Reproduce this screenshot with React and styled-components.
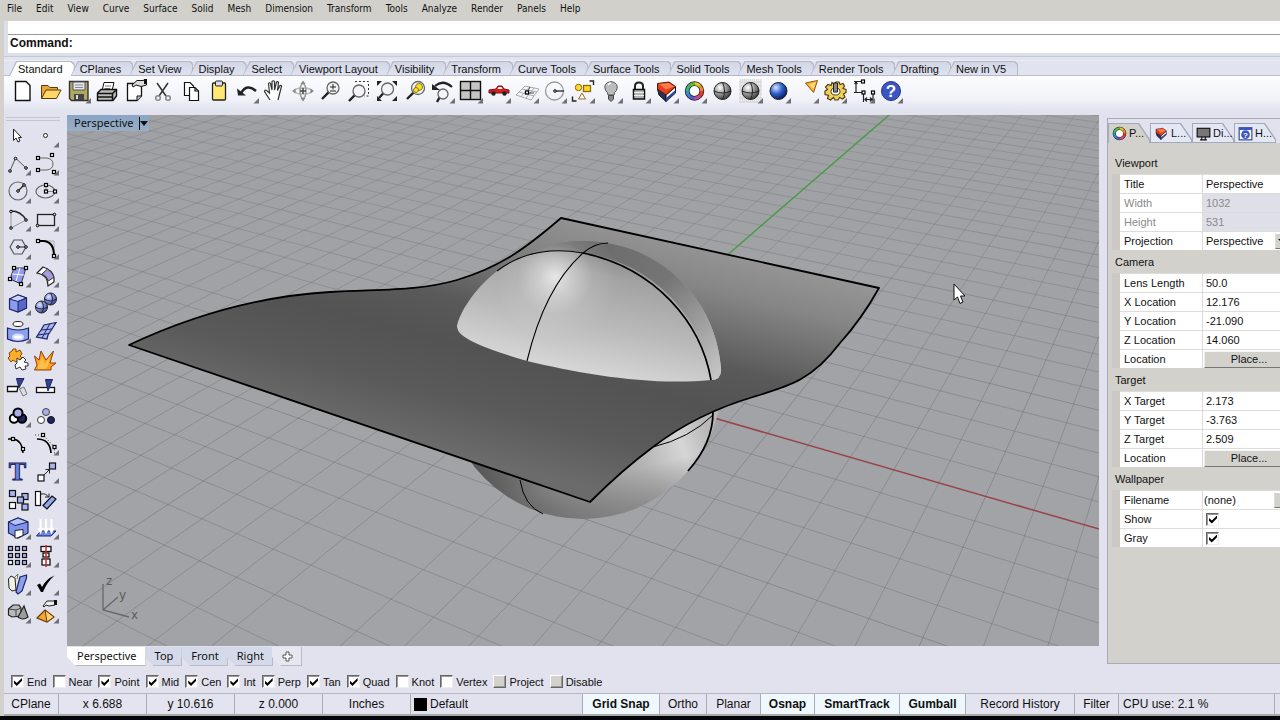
import React from "react";
import styled, { createGlobalStyle, css } from "styled-components";

const sans = `"Liberation Sans", Arial, sans-serif`;
const ui = `"Noto Sans", "Open Sans", sans-serif`;
const menuFont = `"DejaVu Sans Condensed", "DejaVu Sans", sans-serif`;

const GlobalStyle = createGlobalStyle`
  * { box-sizing: border-box; }
  body { margin: 0; background: #05060c; color: #111; font: 11px/16px ${sans}; }
  button, input, select { font: inherit; color: inherit; margin: 0; }
`;

/* ---------- page frame ---------- */

const Page = styled.div`
  min-height: 100vh;
  display: flex;
  flex-direction: column;
  overflow: hidden;
  background: #e1e2ee;
  border-bottom: 4px solid #05060c;
`;

const Body = styled.div`
  flex: 1;
  display: flex;
  flex-direction: column;
  border-left: 4px solid #d3d1cc;
`;

const MenuBar = styled.nav`
  display: flex;
  height: 21px;
  background: #d2d0cb;
`;

const MenuItem = styled.button`
  padding: 0 7px 4px;
  border: 0;
  background: none;
  font: 10px/16px ${menuFont};
  white-space: nowrap;
`;

const CommandArea = styled.section`
  height: 40px;
  padding: 0 0 8px 3px;
  border-bottom: 1px solid #eceef4;
  background: linear-gradient(#dcdee8 35px, #c6cad6 35px, #c6cad6 36px, #e1e3ee 36px);
`;

const CommandHistory = styled.div`
  height: 14px;
  margin-left: 1px;
  background: #fff;
  border-bottom: 1px solid #9b9b9b;
`;

const CommandLine = styled.label`
  display: flex;
  height: 18px;
  margin-left: 1px;
  padding-left: 2px;
  background: #fff;
  font-size: 12px;
  font-weight: 700;
  line-height: 16px;
`;

const CommandInput = styled.input`
  flex: 1;
  border: 0;
  padding: 0 4px;
  background: none;
  outline: 0;
`;

/* ---------- toolbar tabs and buttons ---------- */

const ToolTabs = styled.div`
  display: flex;
  height: 15px;
  padding-left: 5px;
  background: #e1e3ee;
  box-shadow: inset 0 -1px #b9bdcd;
`;

const ToolTab = styled.button`
  position: relative;
  z-index: 0;
  height: 15px;
  padding: 0 8px 0 9px;
  border: 0;
  background: none;
  line-height: 16px;
  white-space: nowrap;
  &::before, &::after {
    content: "";
    position: absolute;
    z-index: -1;
    inset: 0 -4px 0 0;
    clip-path: polygon(0 100%, 7px 0, calc(100% - 3px) 0, 100% 3px, 100% 100%);
    background: #b4b8c8;
  }
  &::after {
    inset: 1px -3px ${(p) => (p.$active ? 0 : 1)}px 1px;
    background: ${(p) => (p.$active ? "#ffffff" : "linear-gradient(#d3d6e6, #dfe2ee)")};
  }
`;

const Toolbar = styled.div`
  display: flex;
  height: 36px;
  padding: 1px 0 0 4px;
  background: linear-gradient(#fdfdff, #f2f3fa 60%, #dfe1ec);
`;

const IconButton = styled.button`
  display: block;
  width: 28px;
  height: 28px;
  padding: 0;
  border: 0;
  background: none;
  svg { display: block; }
`;

/* ---------- work area ---------- */

const Work = styled.main`
  flex: 1;
  display: flex;
  min-height: 556px;
`;

const ToolColumn = styled.aside`
  flex: none;
  width: 63px;
  padding-top: 5px;
`;

const Grip = styled.div`
  width: 54px;
  height: 4px;
  margin-left: 2px;
  border: solid #c3c6d2;
  border-width: 1px 0;
`;

const ToolGrid = styled.div`
  display: grid;
  grid-template-columns: 28px 28px;
`;

const ViewColumn = styled.section`
  flex: 1;
  min-width: 0;
  display: flex;
  flex-direction: column;
  padding-top: 3px;
`;

const Viewport = styled.div`
  flex: 1;
  position: relative;
  min-height: 0;
  overflow: hidden;
  background: #a0a1a5;
`;

const Scene = styled.svg`
  position: absolute;
  inset: 0;
  width: 100%;
  height: 100%;
`;

const ViewTitle = styled.button`
  position: absolute;
  top: 0;
  left: 0;
  display: flex;
  align-items: center;
  height: 16px;
  padding: 0 1px 0 7px;
  border: 0;
  background: linear-gradient(#88a6c6, #9aaec4);
  font: 11px/14px ${ui};
  gap: 5px;
`;

const ViewArrow = styled.span`
  display: flex;
  align-items: center;
  height: 13px;
  border-left: 1px solid #111;
  &::after {
    content: "";
    border: 4px solid transparent;
    border-width: 5px 4px 0;
    border-top-color: #111;
  }
`;

const ViewTabs = styled.div`
  display: flex;
  height: 22px;
  padding-top: 1px;
`;

const ViewTab = styled.button`
  height: 19px;
  padding: 0 8px 0 10px;
  margin-right: -1px;
  border: solid #b7bac6;
  border-width: 0 1px 1px 0;
  background: ${(p) => (p.$active ? "#fff" : p.$plain ? "#e6e7f1" : "#d5daea")};
  clip-path: polygon(0 0, 100% 0, 100% 100%, 9px 100%, 0 10px);
  font: 11px/18px ${ui};
  white-space: nowrap;
  svg { display: block; }
`;

/* ---------- properties panel ---------- */

const Panel = styled.aside`
  flex: none;
  width: 173px;
  margin: 6px 0 4px 8px;
  border: solid #a9abb3;
  border-width: 1px 0 1px 1px;
  background: #d2d1cb;
  overflow: hidden;
`;

const PanelTabs = styled.div`
  display: flex;
  height: 24px;
  padding-top: 4px;
  background: #e1e2ee;
`;

const PanelTab = styled.button`
  position: relative;
  z-index: 0;
  flex: none;
  display: flex;
  align-items: center;
  gap: 2px;
  width: 42px;
  padding: 0 0 0 4px;
  border: 0;
  background: none;
  font: 11px/16px ${sans};
  white-space: nowrap;
  svg { flex: none; }
  &::before, &::after {
    content: "";
    position: absolute;
    z-index: -1;
    inset: 0;
    clip-path: polygon(0 0, calc(100% - 11px) 0, 100% 16px, 100% 100%, 0 100%);
    background: #a4a9bb;
  }
  &::after {
    inset: 1px 1px ${(p) => (p.$active ? 0 : 1)}px 1px;
    background: ${(p) => (p.$active ? "#d2d1cb" : "#e4e8f5")};
  }
`;

const PropTable = styled.table`
  width: 100%;
  margin-top: 8px;
  border-collapse: separate;
  border-spacing: 0;
  table-layout: fixed;
`;

const GutterCol = styled.col`width: 12px;`;
const NameCol = styled.col`width: 83px;`;

const GroupHead = styled.th`
  height: 23px;
  padding: 0 7px;
  text-align: left;
  font-weight: 400;
`;

const Gutter = styled.td`
  padding: 0;
  border-left: 4px solid #d2d1cb;
  background: #cdc8c4;
`;

const NameCell = styled.th`
  height: 19px;
  padding: 0 4px;
  border: solid #dcdcdc;
  border-width: 1px 1px 0 0;
  background: #fff;
  color: ${(p) => (p.$off ? "#8a8a8a" : "#111")};
  text-align: left;
  font-weight: 400;
  line-height: 18px;
`;

const ValueCell = styled.td`
  height: 19px;
  padding: 0;
  border-top: 1px solid #dcdcdc;
  background: ${(p) => (p.$off ? "#dfdfe8" : "#fff")};
  color: ${(p) => (p.$off ? "#8a8a8a" : "#111")};
`;

const ValueRow = styled.div`
  display: flex;
  align-items: center;
  height: 18px;
  padding-left: ${(p) => (p.$flush ? 1 : 3)}px;
`;

const ValueInput = styled.input`
  flex: none;
  width: 70px;
  height: 18px;
  padding: 0;
  border: 0;
  background: none;
  outline: 0;
  &:disabled { color: #8a8a8a; }
`;

const ValueSelect = styled.select`
  flex: none;
  width: 69px;
  height: 18px;
  padding: 0;
  border: 0;
  appearance: none;
  background: none;
`;

const StubButton = styled.button`
  flex: none;
  width: 16px;
  height: 16px;
  padding: 0 2px;
  border: 1px solid;
  border-color: #fff #777 #777 #ddd;
  background: #d2d1cb;
`;

const DropMark = styled.span`
  display: block;
  border: solid transparent;
  border-width: 4px 4px 0;
  border-top-color: #111;
`;

const PlaceButton = styled.button`
  flex: none;
  width: 90px;
  height: 17px;
  padding: 0;
  border: 1px solid;
  border-color: #f4f4f4 #777 #777 #eee;
  background: #d2d1cb;
  line-height: 14px;
`;

const Tick = styled.input`
  appearance: none;
  position: relative;
  flex: none;
  width: 13px;
  height: 13px;
  border: 1px solid;
  border-color: #666 #eee #eee #666;
  background: #fff;
  box-shadow: inset 1px 1px #999;
  &:checked::after {
    content: "";
    position: absolute;
    inset: 2px 1px 1px 2px;
    background: #000;
    clip-path: polygon(0 30%, 35% 62%, 100% 0, 100% 35%, 35% 100%, 0 65%);
  }
  ${(p) =>
    p.$raised &&
    css`
      border-color: #fff #666 #666 #fff;
      background: #d2d1cb;
      box-shadow: inset -1px -1px #999;
    `}
`;

/* ---------- bottom bars ---------- */

const SnapBar = styled.div`
  display: flex;
  align-items: center;
  gap: 6px;
  height: 25px;
  padding: 2px 0 0 7px;
`;

const SnapItem = styled.label`
  display: flex;
  align-items: center;
  gap: 3px;
  white-space: nowrap;
`;

const StatusBar = styled.footer`
  display: flex;
  height: 23px;
  border-top: 1px solid #b5b7c3;
  border-bottom: 2px solid #a9aaa6;
  font-size: 12px;
  line-height: 20px;
`;

const cell = css`
  flex: none;
  width: ${(p) => p.$w}px;
  padding: 0;
  border: solid #a9abb6;
  border-width: 0 1px 0 0;
  background: #e3e4ef;
  text-align: center;
  white-space: nowrap;
`;

const StatusCell = styled.div`
  ${cell}
`;

const StatusToggle = styled.button`
  ${cell}
  background: ${(p) => (p.$on ? "#eef8fd" : "#e3e4ef")};
  font-weight: ${(p) => (p.$on ? 700 : 400)};
`;

const LayerCell = styled.div`
  flex: 1;
  display: flex;
  align-items: center;
  gap: 3px;
  padding-left: 3px;
  border-right: 1px solid #a9abb6;
`;

const Swatch = styled.span`
  width: 13px;
  height: 13px;
  background: #000;
`;

const CpuCell = styled.div`
  flex: none;
  width: 156px;
  padding-left: 4px;
  border-right: 1px solid #a9abb6;
`;

const StatusEnd = styled.div`
  width: 5px;
`;

/* ---------- icons, all on a 28 px cell ---------- */

const K = "#111";
const Sq = ({ x, y, f = "#fff" }) => (
  <rect x={x - 1.5} y={y - 1.5} width="3" height="3" fill={f} stroke="#000" strokeWidth="1.2" />
);
const Dot = ({ x, y }) => <circle cx={x} cy={y} r="1.3" fill="#ddd" stroke="#000" />;
const Lens = ({ x, y, r, hx, hy, f = "#f4f4f8" }) => (
  <>
    <path d={`M${x - r * 0.7} ${y + r * 0.7}L${hx} ${hy}`} stroke="#222" strokeWidth="2.4" />
    <circle cx={x} cy={y} r={r} fill={f} stroke="#666" strokeWidth="1.3" />
  </>
);
const Ball = ({ x, y, r, id, cross }) => (
  <>
    <circle cx={x} cy={y} r={r} fill={`url(#${id})`} stroke="#222" />
    {cross && (
      <path d={`M${x - r} ${y}Q${x} ${y + 4} ${x + r} ${y}M${x} ${y - r}Q${x + 4} ${y} ${x} ${y + r}`} stroke="#222" fill="none" />
    )}
  </>
);
const Ring = ({ x, y, r, w }) => {
  const colors = ["#e0c62c", "#e8862a", "#e0392d", "#c04a9c", "#5659c8", "#2f8fd0", "#33b389", "#62b83a"];
  const at = (a) => `${(x + r * Math.cos(a)).toFixed(2)} ${(y + r * Math.sin(a)).toFixed(2)}`;
  return (
    <g fill="none">
      <circle cx={x} cy={y} r={r} fill="#fff" stroke="#222" strokeWidth={w + 1.6} />
      {colors.map((c, i) => {
        const a = -Math.PI / 2 + (i * Math.PI) / 4;
        return <path key={c} d={`M${at(a)}A${r} ${r} 0 0 1 ${at(a + Math.PI / 4 + 0.05)}`} stroke={c} strokeWidth={w} />;
      })}
    </g>
  );
};
const Wedge = () => (
  <>
    <path d="M5.5 12L14 18V24.500L7 18Z" fill="#26335f" stroke="#111" />
    <path d="M14 18L23.500 10V16L14 24.500Z" fill="#fff" stroke="#111" />
    <path d="M14 21L23.500 13V16L14 24.500Z" fill="#33488f" />
    <path d="M5.500 6.500L17 5L23.500 9.500L14 18L5.500 12Z" fill="#e2401f" stroke="#5d150b" />
    <path d="M7 7L16.500 6L22 9.500L14 12.500Z" fill="#ff7a4a" />
  </>
);

const icons = {
  fresh: <path d="M7.5 4.5H18L22 8.500V23.500H7.500Z" fill="#fff" stroke={K} strokeWidth="1.400" />,
  open: (
    <>
      <path d="M5.500 21.500V8.500H12L14 10.500H21.500V13" fill="#e9a63a" stroke="#5a3a08" />
      <path d="M5.500 21.500L10 13H25L20.500 21.500Z" fill="#ffd768" stroke="#5a3a08" />
    </>
  ),
  save: (
    <>
      <path d="M5.500 4.500H24V23.500H7.500L5.500 21.500Z" fill="#b0a860" stroke="#333" strokeWidth="1.400" />
      <path d="M9 5H21V13H9Z" fill="#e4e6ee" stroke="#555" />
      <path d="M11 8H19M11 10.500H19" stroke="#8a8a8a" />
      <path d="M10 17H20V23H10Z" fill="#444" />
      <path d="M12 18H14V22H12Z" fill="#ddd" />
    </>
  ),
  print: (
    <>
      <path d="M10 14L12 5.500H22L20 14" fill="#fff" stroke={K} />
      <path d="M13 9H19M12.500 11.500H18" stroke="#777" />
      <path d="M5.500 16L9 12.500H24.500V19L21 23.500H5.500Z" fill="#bbb" stroke={K} strokeWidth="1.400" />
      <path d="M5.500 16.500H20.500L24.500 12.500M20.500 16.500V23M6 20H20" fill="none" stroke={K} strokeWidth="1.500" />
    </>
  ),
  props: (
    <>
      <path d="M7.500 6.500H21.500V19L17 23.500H7.500Z" fill="#fff" stroke={K} strokeWidth="1.300" />
      <path d="M17 23.500V19H21.500" fill="#ccc" stroke={K} />
      <path d="M12 8L17 3.500H22L26.500 3V8L21 9.500L16 8L13 10Z" fill="#ddd" stroke={K} />
      <path d="M24 2H27V7H24Z" fill="#111" />
    </>
  ),
  cut: (
    <g fill="none" stroke="#333">
      <path d="M9 6L18 19M20 6L11 19" strokeWidth="1.500" />
      <circle cx="10" cy="21" r="2.300" stroke="#888" strokeWidth="1.500" />
      <circle cx="20" cy="21" r="2.300" stroke="#888" strokeWidth="1.500" />
    </g>
  ),
  copy: (
    <g fill="#fff" stroke={K} strokeWidth="1.200">
      <path d="M8.500 5.500H14L17.500 9V18.500H8.500Z" />
      <path d="M13.500 10.500H19L22.500 14V23.500H13.500Z" />
      <path d="M19 10.500V14H22.500" fill="none" />
    </g>
  ),
  paste: (
    <>
      <rect x="8.500" y="6" width="13" height="17" rx="1" fill="#ffe873" stroke="#222" strokeWidth="1.300" />
      <rect x="11.500" y="4" width="7" height="5" rx="1" fill="#d9dbe6" stroke="#222" />
    </>
  ),
  undo: (
    <>
      <path d="M9 16Q15 6 24 14" fill="none" stroke="#222" strokeWidth="2.500" />
      <path d="M5 11.500L14 18.500H6Z" fill="#222" />
    </>
  ),
  hand: (
    <path d="M10 23L4.500 14.500Q4.500 12.500 6.500 13.500L9.500 16L8.500 6.500Q9.500 5 10.500 6.500L12 13L12 4.500Q13.500 3 14.500 4.500V13L16.500 5Q18 4 18.500 5.500L17.500 13.500L20 8.500Q21.500 8 21.500 9.500L19.500 17L18 23" fill="#fff" stroke="#333" strokeWidth="1.200" />
  ),
  rotate: (
    <g fill="none" strokeWidth="1.500">
      <ellipse cx="15" cy="14" rx="8.500" ry="3" stroke="#bbb" />
      <ellipse cx="15" cy="14" rx="3" ry="7.500" stroke="#999" />
      <path d="M12.500 7L15 3.500L17.500 7ZM12.500 21L15 24.500L17.500 21ZM7.500 11.500L4 14L7.500 16.500ZM22.500 11.500L26 14L22.500 16.500Z" fill="#888" />
      <path d="M12 14H18M15 11V17" stroke="#444" />
    </g>
  ),
  zoomIn: (
    <>
      <Lens x={17} y={11} r={6} hx={6} hy={22} />
      <path d="M14 10H20M17 7V12.500M14 14H20" stroke="#222" />
    </>
  ),
  zoomWin: (
    <>
      <Lens x={15} y={14} r={6} hx={5} hy={24} />
      <path d="M11 4.500H24.500V19H20" fill="none" stroke="#333" strokeDasharray="2 2" />
    </>
  ),
  zoomAll: (
    <>
      <Lens x={15.5} y={12} r={6} hx={7} hy={21} />
      <path d="M5 4H10L5 9ZM25 4H20L25 9ZM25 24H20L25 19ZM5 24V19L10 24Z" fill="#222" />
    </>
  ),
  zoomSel: (
    <>
      <Lens x={18} y={11} r={6.5} hx={7} hy={22} />
      <circle cx="19" cy="10" r="3.500" fill="#f5e02d" stroke="#8a7a10" />
      <circle cx="16" cy="13" r="2.500" fill="#f5e02d" stroke="#8a7a10" />
    </>
  ),
  viewUndo: (
    <>
      <Lens x={15} y={17} r={5} hx={9} hy={25} />
      <path d="M7 9Q15 2 24 10" fill="none" stroke="#222" strokeWidth="2.200" />
      <path d="M4 7V13H12Z" fill="#222" />
    </>
  ),
  fourView: (
    <>
      <rect x="4.500" y="4.500" width="20" height="18" fill="#c4c4c4" stroke={K} strokeWidth="1.400" />
      <path d="M14.500 4V23M4 13.500H25" stroke={K} strokeWidth="1.400" />
    </>
  ),
  car: (
    <>
      <path d="M5 13L12 12L14 9H18L20 12L25 13V16H5Z" fill="#d62020" stroke="#7d0c0c" />
      <path d="M14.500 10H17.500L18.500 12H13.500Z" fill="#fff" />
      <circle cx="9.500" cy="16.500" r="2.200" fill="#222" />
      <circle cx="20.500" cy="16.500" r="2.200" fill="#222" />
    </>
  ),
  cplane: (
    <>
      <path d="M4 18L13 9L27 12L19 23ZM7 15L22 19M10 12L25 15M9 19.500L17.500 10M14 21L22 11" fill="none" stroke="#aaa" />
      <path d="M15 16H22M15 16L18 10" stroke="#444" />
      <Sq x={15} y={15.5} />
    </>
  ),
  radius: (
    <>
      <circle cx="14.500" cy="14" r="9" fill="none" stroke="#999" strokeWidth="1.300" />
      <path d="M15 14H24" stroke="#222" strokeWidth="1.300" />
      <Dot x={15} y={14} />
    </>
  ),
  shapes: (
    <>
      <circle cx="10.500" cy="10.500" r="3.200" fill="#ffd92e" stroke="#8a6d00" />
      <rect x="15.500" y="8.500" width="7" height="6" fill="#ffd92e" stroke="#8a6d00" strokeWidth="1.300" />
      <path d="M14 16L17.500 22H10.500Z" fill="#fff" stroke="#a5672c" />
      <path d="M21.500 4H25.500V8M4.500 19.500V24H8.500" fill="none" stroke="#222" strokeWidth="1.400" />
    </>
  ),
  bulb: (
    <>
      <path d="M12 18Q12 15 9.500 13.500Q6.500 6 15 4.500Q23.500 6 20.500 13.500Q18 15 18 18Z" fill="#bcbcbc" stroke="#555" />
      <path d="M12.500 18.500H17.500V22L15 24.500L12.500 22Z" fill="#888" stroke="#444" />
      <path d="M12 8Q13 6 15 6" fill="none" stroke="#fff" strokeWidth="1.500" />
    </>
  ),
  lock: (
    <>
      <path d="M11 13V9Q11 5.500 15 5.500Q19 5.500 19 9V13" fill="none" stroke="#222" strokeWidth="2" />
      <rect x="9.500" y="12.500" width="11" height="9.500" fill="#b5b5b5" stroke={K} strokeWidth="1.500" />
      <path d="M10 15.500H20M10 18.500H20" stroke="#eee" />
    </>
  ),
  layers: <Wedge />,
  color: <Ring x={14.5} y={14} r={7.3} w={3.2} />,
  shade: <Ball x={14.5} y={14} r={8.5} id="gBall" cross />,
  shadeSel: (
    <>
      <rect x="3" y="2" width="23" height="24" fill="#dcdcdf" />
      <path d="M3 3H26M3 7H26M3 11H26M3 15H26M3 19H26M3 23H26" stroke="#fff" strokeDasharray="1 1" />
      <Ball x={14.5} y={14} r={8.5} id="gBall" cross />
    </>
  ),
  render: <Ball x={14.5} y={14} r={8.5} id="bBall" />,
  light: (
    <>
      <path d="M13.500 6L25.500 3.500L21.500 15.500Z" fill="#ffb02e" stroke="#8a5a10" />
      <path d="M17 7.500L24 5L21.500 12Z" fill="#ffd77d" />
    </>
  ),
  gear: (
    <>
      <path d="M12 5.500L14 7L16 5H19L20 7.500L23 6.500L24.500 9L23 11.500L26 12.500V15.500L23.500 17L25 20L22.500 22L19.500 20.500L18 23H15L13.500 20.500L10.500 23L7.500 21.500L8.500 18.500L5 17.500V14L7.500 12.500L5.500 10L8 7.500L11 8.500Z" fill="#f1cf5b" stroke="#4f3f0c" strokeWidth="1.200" />
      <ellipse cx="15.500" cy="14.500" rx="4.500" ry="3.500" fill="#fff" stroke="#4f3f0c" />
      <path d="M13.500 6H17.500V15H13.500Z" fill="#8a8a8a" stroke="#222" />
    </>
  ),
  dims: (
    <g fill="none" stroke="#222" strokeWidth="1.200">
      <path d="M6 4.500H14M6 15.500H14M8 5V15M15.500 17V25M25 17V25M17 22.500H24M19 20.500L17 22.500L19 24.500M22 20.500L24 22.500L22 24.500M6.500 7L8 5L9.500 7" />
      <Sq x={15} y={4.5} />
      <Sq x={15.5} y={15.5} />
      <Sq x={25} y={15.5} />
    </g>
  ),
  help: (
    <>
      <circle cx="15" cy="14" r="9.500" fill="#3c55c4" stroke="#26347c" />
      <text x="15" y="20" textAnchor="middle" fontFamily="Liberation Sans" fontWeight="700" fontSize="17" fill="#fff">?</text>
    </>
  ),

  pointer: <path d="M9.500 8V19.500L12 17L14 21L16 20L14.500 16.500H17.500Z" fill="#fff" stroke="#222" />,
  point: <circle cx="13.500" cy="14.500" r="2" fill="#fff" stroke="#222" />,
  polyline: (
    <>
      <path d="M6 22L11.500 9L22 19" fill="none" stroke="#555" />
      <Dot x={6} y={22} /><Dot x={11.5} y={9.5} /><Dot x={22} y={19} />
    </>
  ),
  curve: (
    <>
      <path d="M6 9H15Q21 10 21 15T15 21H6" fill="none" stroke="#666" />
      <Sq x={6} y={9} /><Sq x={20} y={6} /><Sq x={6} y={21} /><Sq x={22} y={23} />
    </>
  ),
  circle: (
    <>
      <circle cx="14" cy="14" r="9" fill="none" stroke="#666" strokeWidth="1.200" />
      <path d="M14 14L20 8" stroke="#222" strokeWidth="1.300" />
      <Dot x={14} y={14} /><Dot x={20} y={8} />
    </>
  ),
  ellipse: (
    <>
      <ellipse cx="13.500" cy="14.500" rx="9.500" ry="6.500" fill="none" stroke="#666" strokeWidth="1.200" />
      <path d="M14 14.500H23M14 14V8" stroke="#888" />
      <Sq x={14} y={8} /><Sq x={14} y={14.5} /><Sq x={23} y={14.5} />
    </>
  ),
  arc: (
    <>
      <path d="M7 6Q17 6 22 15" fill="none" stroke="#222" strokeWidth="1.500" />
      <path d="M7 6V23L22 15" fill="none" stroke="#999" />
      <Dot x={7} y={6.5} /><Dot x={22} y={15} /><Dot x={7} y={23} />
    </>
  ),
  rect: (
    <>
      <rect x="5.500" y="9.500" width="17" height="11" fill="none" stroke="#222" strokeWidth="1.300" />
      <Dot x={22.5} y={9.5} /><Dot x={5.5} y={20.5} />
    </>
  ),
  polygon: (
    <>
      <path d="M6 14L10 7H18L22 14L18 21H10Z" fill="none" stroke="#555" strokeWidth="1.200" />
      <path d="M14 14H22" stroke="#222" /><Dot x={14} y={14} /><Dot x={22} y={14} />
    </>
  ),
  fillet: (
    <>
      <path d="M6 8H22V23" fill="none" stroke="#aaa" />
      <path d="M6 8H12Q22 9 22 23" fill="none" stroke="#000" strokeWidth="2" />
      <Sq x={6} y={8} /><Sq x={22} y={23} />
    </>
  ),
  patch: (
    <>
      <path d="M10 7H22L17 23L6 18Z" fill="#8f9cf0" stroke="#333" />
      <path d="M8 13L20 14M16 7L12 20" stroke="#fff" />
      <Sq x={10} y={7} /><Sq x={22} y={7} /><Sq x={6} y={18} /><Sq x={17} y={23} />
    </>
  ),
  sweep: (
    <>
      <path d="M5 12L11 6Q21 9 22 17V21L16 25Q16 14 5 12Z" fill="#fff" stroke="#222" strokeWidth="1.200" />
      <path d="M10 13L15.500 8Q21 12 22 16L16.500 20Q15 15 10 13Z" fill="#a99be0" stroke="#333" />
    </>
  ),
  box: (
    <>
      <path d="M5.500 10L14 6L22.500 9V19L14 23L5.500 20Z" fill="#8b9bf0" stroke="#1d2464" strokeWidth="1.200" />
      <path d="M5.500 10L14 6L22.500 9L14 12.500Z" fill="#ccd3ff" stroke="#1d2464" />
      <path d="M14 12.500L22.500 9V19L14 23Z" fill="#5668cc" stroke="#1d2464" />
    </>
  ),
  union: (
    <>
      <Ball x={18.5} y={10} r={6} id="lBall" cross />
      <Ball x={9.5} y={18} r={6} id="lBall" cross />
    </>
  ),
  cylinder: (
    <>
      <ellipse cx="14" cy="7" rx="5" ry="2.500" fill="#fff" stroke="#222" />
      <path d="M3.500 11Q14 15 24.500 11V22Q14 27 3.500 22Z" fill="#8ca0ec" stroke="#1d2464" strokeWidth="1.200" />
      <ellipse cx="14" cy="20" rx="5" ry="2.500" fill="#fff" stroke="#d3daff" strokeWidth="2" />
    </>
  ),
  mesh: (
    <>
      <path d="M4.500 20L9 13L12 8L24 5.500L20 12L16 18L15 22Z" fill="#a9b6f0" stroke="#1d2464" strokeWidth="1.200" />
      <path d="M9 13L20 12M6 18L17 16.500M18 6.500L10 21" fill="none" stroke="#1d2464" />
    </>
  ),
  puzzle: (
    <>
      <path d="M5 8L8 6L9 4L12 4L12 7L16 5L18 9L16 11L18 13L12 17L9 15L7 17L4 13L6 11Z" fill="#ffae2b" stroke="#7d4a05" />
      <path d="M13 13L16 15L19 12L22 15L20 17L24 18V21L21 21L22 24L18 25L16 22L12 24L11 20L13 18Z" fill="#fff" stroke="#333" />
    </>
  ),
  explode: (
    <>
      <path d="M2.500 11L7 15L9 6L14 15L21.500 6L18 18L24 18L19 22V25H2.500L5 20Z" fill="#ffa01f" stroke="#8f4206" />
      <path d="M6 21L10 12L13 19L18 11L16 21L13 24H6Z" fill="#ffc04d" />
    </>
  ),
  trim: (
    <>
      <path d="M3.500 13.500H14L13 18.500H3.500Z" fill="#fff" stroke={K} strokeWidth="1.300" />
      <path d="M12.500 5.500H20L15 15Z" fill="#33448c" stroke="#1d2464" />
      <path d="M15.500 16L20 14L23 21L19 23Z" fill="#ddd" stroke="#777" />
    </>
  ),
  split: (
    <>
      <rect x="4.500" y="14.500" width="18" height="5" fill="#fff" stroke={K} strokeWidth="1.300" />
      <path d="M13.500 6.500H20.500L16 18Z" fill="#33448c" stroke="#1d2464" />
    </>
  ),
  join: (
    <>
      <circle cx="10" cy="17.500" r="4.200" fill="#fff" stroke="#000" strokeWidth="2" />
      <circle cx="18" cy="17.500" r="4.200" fill="#1d2464" stroke="#000" strokeWidth="2" />
      <circle cx="14" cy="12" r="4.500" fill="#a9aee8" stroke="#000" strokeWidth="2" />
    </>
  ),
  group: (
    <>
      <circle cx="14" cy="11" r="3.500" fill="#a9aee8" stroke="#444" />
      <circle cx="9" cy="19" r="3.500" fill="#fff" stroke="#333" />
      <circle cx="19" cy="19" r="3.500" fill="#1d2464" stroke="#111" />
    </>
  ),
  editPts: (
    <>
      <path d="M4 10H9Q18 11 19 24" fill="none" stroke="#000" strokeWidth="1.500" />
      <Sq x={9} y={10} /><Sq x={19} y={20} />
    </>
  ),
  ctrlPts: (
    <>
      <path d="M5 10Q18 10 19 24" fill="none" stroke="#000" strokeWidth="1.700" />
      <path d="M3 6H11L22.500 18V25" fill="none" stroke="#333" strokeDasharray="1 2" />
      <Sq x={11} y={6} /><Sq x={22.5} y={18} />
    </>
  ),
  type: (
    <text x="13.500" y="23" textAnchor="middle" fontFamily="Liberation Serif" fontWeight="700" fontSize="26" fill="#6f86e0" stroke="#1d2464" strokeWidth="1">T</text>
  ),
  move: (
    <>
      <rect x="6" y="18" width="6" height="6" fill="#fff" stroke={K} strokeWidth="1.200" />
      <rect x="17.500" y="6" width="6" height="6" fill="#aab4f0" stroke={K} strokeWidth="1.200" />
      <path d="M12 18L17 13M13.500 12.500H17.500V16.500" fill="none" stroke="#222" />
    </>
  ),
  array: (
    <g stroke={K} strokeWidth="1.200" fill="#aab4f0">
      <rect x="5.500" y="5.500" width="6" height="6" />
      <rect x="18" y="8.500" width="6" height="6" />
      <rect x="13.500" y="12" width="6" height="6" />
      <rect x="18" y="19" width="6" height="6" />
      <rect x="5.500" y="17.500" width="6" height="6" fill="#fff" />
    </g>
  ),
  orient: (
    <>
      <rect x="3.500" y="6.500" width="5" height="14" fill="#fff" stroke={K} strokeWidth="1.200" />
      <path d="M11 20.500L20 11L24 14L15 24Z" fill="#91a5ee" stroke={K} strokeWidth="1.200" />
      <path d="M9 9Q14 8 16.500 12M13 12H17V8.500" fill="none" stroke="#222" />
    </>
  ),
  solid: (
    <>
      <path d="M4.500 9L14 5L24 9V20L14 25L4.500 20Z" fill="#7f93e8" stroke="#1d2464" strokeWidth="1.200" />
      <path d="M4.500 9L14 5L24 9L11 12.500Z" fill="#b4c2fa" stroke="#1d2464" />
      <path d="M11 17.500L19 16.500V22.500L13 25H11Z" fill="#fff" stroke="#222" />
    </>
  ),
  project: (
    <>
      <path d="M4.500 23L9 18H24L19 23Z" fill="#6f86e8" stroke="#1d2464" />
      <path d="M8.500 6V18M14 6V18M19.500 6V18M6.500 15L8.500 19L10.500 15M12 15L14 19L16 15M17.500 15L19.500 19L21.500 15" fill="none" stroke="#fff" strokeWidth="2" />
    </>
  ),
  grid9: (
    <g stroke={K} strokeWidth="1.200">
      {[0, 1, 2].map((r) => [0, 1, 2].map((c) => <rect key={`${r}${c}`} x={4.5 + 7 * c} y={5.5 + 7 * r} width="4" height="4" fill={r === 2 && c === 0 ? "#fff" : "#aab4f0"} />))}
    </g>
  ),
  align: (
    <>
      <g fill="#fff" stroke={K} strokeWidth="1.300">
        <rect x="9" y="5.500" width="10" height="5" />
        <rect x="11" y="12" width="6" height="4" />
        <rect x="10" y="18" width="8" height="6" />
      </g>
      <path d="M14 4V26" stroke="#d8232e" strokeWidth="1.500" />
    </>
  ),
  bend: (
    <>
      <path d="M4.500 10L7 7L11 9L12 21L8 22L5 19Z" fill="#f1f1e4" stroke="#222" />
      <path d="M11 8L14 5L13 10" fill="#fff" stroke="#5b7d4a" />
      <path d="M12 23L16 8L22.500 6V9L18 22L14 25Z" fill="#8ca0ec" stroke="#1d2464" strokeWidth="1.200" />
    </>
  ),
  check: <path d="M5 16L8 14.500L10 18Q14 10 22.500 6.500Q15 13 11 23H9Z" fill="#000" />,
  solids: (
    <>
      <path d="M4.500 12L9 8H15L17 11V19L8 20L4.500 18Z" fill="#b9b9b9" stroke="#222" strokeWidth="1.200" />
      <path d="M20 9L24 20Q19 24 14 20Z" fill="#9c9c9c" stroke="#222" strokeWidth="1.200" />
      <path d="M4.500 12L12 13L17 11M12 13V19" fill="none" stroke="#444" />
    </>
  ),
  pyramid: (
    <>
      <path d="M5 21L13 13L22 20L15 25Z" fill="#f2a637" stroke="#6b3b05" strokeWidth="1.200" />
      <path d="M13 13L15 25L22 20Z" fill="#ffd27a" stroke="#6b3b05" />
      <path d="M11 9L15 4H23V8L17 9L14 8L12 10Z" fill="#eee" stroke="#222" />
      <path d="M22 3H25V8H22Z" fill="#111" />
    </>
  ),
};

const Icon = ({ name, more }) => (
  <svg width="28" height="28" viewBox="0 0 28 28" fill="none" aria-hidden="true">
    {icons[name]}
    {more && <path d="M27 21V26.500H21.500Z" fill="#6f6f76" />}
  </svg>
);

const HiddenSvg = styled.svg`
  position: absolute;
`;

const GradientDefs = () => (
  <HiddenSvg width="0" height="0" aria-hidden="true">
    <defs>
      {[["gBall", "#ffffff", "#9a9a9a", "#333"], ["bBall", "#d6e6ff", "#2d5fd0", "#08164e"], ["lBall", "#dde3ff", "#8294e6", "#35459c"]].map(([id, a, b, c]) => (
        <radialGradient key={id} id={id} cx=".35" cy=".3" r=".75">
          <stop offset="0" stopColor={a} />
          <stop offset=".5" stopColor={b} />
          <stop offset="1" stopColor={c} />
        </radialGradient>
      ))}
    </defs>
  </HiddenSvg>
);

/* ---------- perspective view ---------- */

const EYE = [12.176, -21.09, 14.06];
const FORWARD = [-0.433, 0.7501, -0.5];
const RIGHT = [0.8661, 0.5, 0];
const UP = [-0.25, 0.433, 0.8662];
const FOCAL = 1106;
const MID = [583, 380];
const dot = (a, b) => a[0] * b[0] + a[1] * b[1] + a[2] * b[2];

function groundLine(a, b) {
  const near = 4;
  const rel = (p) => [p[0] - EYE[0], p[1] - EYE[1], -EYE[2]];
  let [p, q] = [rel(a), rel(b)];
  const [dp, dq] = [dot(p, FORWARD), dot(q, FORWARD)];
  if (dp < near && dq < near) return "";
  const cut = (s, t, ds, dt) => s.map((v, i) => v + ((t[i] - v) * (near - ds)) / (dt - ds));
  if (dp < near) p = cut(p, q, dp, dq);
  else if (dq < near) q = cut(q, p, dq, dp);
  const toScreen = (v) => {
    const d = dot(v, FORWARD);
    return `${(MID[0] + (FOCAL * dot(v, RIGHT)) / d).toFixed(1)} ${(MID[1] - (FOCAL * dot(v, UP)) / d).toFixed(1)}`;
  };
  return `M${toScreen(p)}L${toScreen(q)}`;
}

const SPAN = 70;
const steps = Array.from({ length: SPAN * 2 + 1 }, (_, i) => i - SPAN);
const gridPath = (pick) =>
  steps.filter(pick).map((n) => groundLine([n, -SPAN], [n, SPAN]) + groundLine([-SPAN, n], [SPAN, n])).join("");
const minorGrid = gridPath((n) => n % 5 !== 0);
const majorGrid = gridPath((n) => n % 5 === 0 && n !== 0);

const SHEET =
  "M129 345C195 314 262 296 330 292C385 289 418 291 457 280C500 267 525 249 561 218L879 288Q861 320 840 343C812 380 790 386 753 397Q696 414 653 447Q622 470 590 502Z";
const DOME =
  "M457 326C461 308 479 285 497 271C520 252 550 241 583 241C655 241 715 294 721 368Q722 380 711 380C650 386 582 374 527 361Q475 346 462 335Q457 331 457 326Z";

const PerspectiveScene = () => (
  <Scene viewBox="67 115 1032 531" preserveAspectRatio="xMidYMid slice" role="img" aria-label="Perspective view of a sphere through a curved surface">
    <defs>
      <linearGradient id="haze" gradientUnits="userSpaceOnUse" x1="0" y1="115" x2="0" y2="400">
        <stop offset="0" stopColor="#9d9ea1" stopOpacity=".4" />
        <stop offset="1" stopColor="#9d9ea1" stopOpacity="0" />
      </linearGradient>
      <linearGradient id="sheet" gradientUnits="userSpaceOnUse" x1="725" y1="248" x2="660" y2="505">
        <stop offset="0" stopColor="#969696" />
        <stop offset=".16" stopColor="#868686" />
        <stop offset=".44" stopColor="#595959" />
        <stop offset=".6" stopColor="#535353" />
        <stop offset=".8" stopColor="#5a5a5a" />
        <stop offset="1" stopColor="#6b6b6b" />
      </linearGradient>
      <linearGradient id="dome" gradientUnits="userSpaceOnUse" x1="620" y1="241" x2="590" y2="384">
        <stop offset="0" stopColor="#7a7a7a" />
        <stop offset=".25" stopColor="#a2a2a2" />
        <stop offset=".6" stopColor="#bababa" />
        <stop offset="1" stopColor="#dcdcdc" />
      </linearGradient>
      <linearGradient id="back" gradientUnits="userSpaceOnUse" x1="600" y1="245" x2="720" y2="375">
        <stop offset="0" stopColor="#6c6c6c" />
        <stop offset=".4" stopColor="#757575" />
        <stop offset=".65" stopColor="#969696" />
        <stop offset="1" stopColor="#c6c6c6" />
      </linearGradient>
      <radialGradient id="shine" gradientUnits="userSpaceOnUse" cx="555" cy="277" r="62">
        <stop offset="0" stopColor="#fff" stopOpacity=".72" />
        <stop offset=".25" stopColor="#fff" stopOpacity=".42" />
        <stop offset=".6" stopColor="#fff" stopOpacity=".1" />
        <stop offset="1" stopColor="#fff" stopOpacity="0" />
      </radialGradient>
      <linearGradient id="bowl" gradientUnits="userSpaceOnUse" x1="480" y1="505" x2="705" y2="425">
        <stop offset="0" stopColor="#505050" />
        <stop offset=".35" stopColor="#8a8a8a" />
        <stop offset=".7" stopColor="#b4b4b4" />
        <stop offset=".88" stopColor="#d6d6d6" />
        <stop offset="1" stopColor="#b8b8b8" />
      </linearGradient>
      <linearGradient id="bowlEdge" gradientUnits="userSpaceOnUse" x1="590" y1="480" x2="600" y2="520">
        <stop offset="0" stopColor="#444" stopOpacity="0" />
        <stop offset="1" stopColor="#555" stopOpacity=".4" />
      </linearGradient>
    </defs>
    <rect x="-933" y="-385" width="3032" height="1531" fill="#a2a3a6" />
    <path d={minorGrid} stroke="#606266" strokeOpacity=".34" fill="none" />
    <path d={majorGrid} stroke="#606266" strokeOpacity=".4" fill="none" />
    <rect x="-933" y="-385" width="3032" height="1531" fill="url(#haze)" />
    <path d={groundLine([0, 0], [SPAN, 0])} stroke="#98424a" strokeWidth="1.500" />
    <path d={groundLine([0, 0], [0, SPAN])} stroke="#4a9c4a" strokeWidth="1.500" />

    <circle cx="583" cy="380" r="139" fill="url(#bowl)" />
    <circle cx="583" cy="380" r="139" fill="url(#bowlEdge)" />
    <g fill="none" stroke="#000">
      <path d="M713 412Q713 443 688 471" strokeWidth="1.800" />
      <path d="M713 415Q690 438 653 447M520 480Q524 506 543 514" />
    </g>
    <path d={SHEET} fill="url(#sheet)" stroke="#000" strokeWidth="1.800" strokeLinejoin="round" />
    <path d={DOME} fill="url(#dome)" />
    <path d="M583 253C560 247 520 252 497 271C520 252 550 241 583 241C655 241 715 294 721 368Q722 380 711 380C705 322 655 262 583 253Z" fill="url(#back)" />
    <path d={DOME} fill="url(#shine)" />
    <g fill="none" stroke="#000">
      <path d="M497 271C522 252 550 247 583 253M608 243C598 243 590 247 583 253C555 278 538 315 527 361" strokeWidth="1.100" />
      <path d="M583 253C655 268 701 322 711 380" strokeWidth="1.700" />
    </g>

    <g stroke="#66676a" strokeWidth="1.300" fill="none">
      <path d="M103 584V610L129 617M103 610L118 597" />
    </g>
    <g fill="#5c5d60" fontFamily="DejaVu Sans" fontSize="12">
      <text x="106" y="585">z</text>
      <text x="119" y="599">y</text>
      <text x="131" y="619">x</text>
    </g>
    <path d="M954 284V300L957.500 297L960 303.500L963 302L960.500 296H965Z" fill="#fff" stroke="#111" />
  </Scene>
);

/* ---------- data ---------- */

const menus = ["File", "Edit", "View", "Curve", "Surface", "Solid", "Mesh", "Dimension", "Transform", "Tools", "Analyze", "Render", "Panels", "Help"];

const toolTabs = ["Standard", "CPlanes", "Set View", "Display", "Select", "Viewport Layout", "Visibility", "Transform", "Curve Tools", "Surface Tools", "Solid Tools", "Mesh Tools", "Render Tools", "Drafting", "New in V5"];

/* a trailing "+" marks a button that opens a flyout */
const toolbar = "fresh open save+ print props cut copy paste undo+ hand rotate zoomIn zoomWin zoomAll zoomSel viewUndo+ fourView+ car+ cplane+ radius+ shapes+ bulb+ lock+ layers+ color+ shade shadeSel+ render+ light+ gear+ dims+ help+".split(" ");

const sideTools = "pointer point+ polyline+ curve+ circle+ ellipse+ arc+ rect+ polygon+ fillet+ patch+ sweep+ box+ union+ cylinder+ mesh+ puzzle explode trim split join+ group editPts ctrlPts+ type move+ array orient solid+ project+ grid9+ align+ bend+ check+ solids+ pyramid+".split(" ");

const groups = [
  ["Viewport", [["Title", "Perspective"], ["Width", "1032", "off"], ["Height", "531", "off"], ["Projection", "Perspective", "select"]]],
  ["Camera", [["Lens Length", "50.0"], ["X Location", "12.176"], ["Y Location", "-21.090"], ["Z Location", "14.060"], ["Location", "Place...", "button"]]],
  ["Target", [["X Target", "2.173"], ["Y Target", "-3.763"], ["Z Target", "2.509"], ["Location", "Place...", "button"]]],
  ["Wallpaper", [["Filename", "(none)", "file"], ["Show", "", "check"], ["Gray", "", "check"]]],
];

const snaps = [["End", 1], ["Near", 0], ["Point", 1], ["Mid", 1], ["Cen", 1], ["Int", 1], ["Perp", 1], ["Tan", 1], ["Quad", 1], ["Knot", 0], ["Vertex", 0], ["Project", 0, 1], ["Disable", 0, 1]];

const toggles = [["Grid Snap", 77, 1], ["Ortho", 47], ["Planar", 54], ["Osnap", 54, 1], ["SmartTrack", 85, 1], ["Gumball", 66, 1], ["Record History", 109], ["Filter", 44]];

const ToolButton = ({ spec }) => {
  const name = spec.replace("+", "");
  return (
    <IconButton type="button" aria-label={name}>
      <Icon name={name} more={spec.endsWith("+")} />
    </IconButton>
  );
};

const PropValue = ({ id, kind, value }) => {
  if (kind === "button") return <ValueRow $flush><PlaceButton id={id}>{value}</PlaceButton></ValueRow>;
  if (kind === "check") return <ValueRow><Tick id={id} type="checkbox" defaultChecked /></ValueRow>;
  if (kind === "select")
    return (
      <ValueRow>
        <ValueSelect id={id}><option>{value}</option></ValueSelect>
        <StubButton aria-label="Open projection list"><DropMark /></StubButton>
      </ValueRow>
    );
  if (kind === "file")
    return (
      <ValueRow $flush>
        <ValueInput id={id} defaultValue={value} />
        <StubButton aria-label="Browse" />
      </ValueRow>
    );
  return <ValueRow><ValueInput id={id} defaultValue={value} disabled={kind === "off"} /></ValueRow>;
};

const tabIcons = [
  ["P...", <Ring key="p" x={15} y={14} r={9} w={4} />],
  ["L...", <Wedge key="l" />],
  ["Di...", <g key="d"><rect x="4" y="5" width="22" height="15" fill="#777" stroke="#111" strokeWidth="2" /><path d="M12 20V24M18 20V24M9 25H21" stroke="#111" strokeWidth="2" /></g>],
  ["H...", <g key="h"><rect x="4" y="4" width="22" height="21" fill="#fff" stroke="#33488f" strokeWidth="2" /><path d="M4 6H26" stroke="#3c55c4" strokeWidth="4" /><circle cx="15" cy="16" r="7.500" fill="#3c55c4" /><text x="15" y="21" textAnchor="middle" fontSize="14" fontWeight="700" fill="#fff" fontFamily="Liberation Sans">?</text></g>],
];

export default function App() {
  return (
    <Page>
      <GlobalStyle />
      <GradientDefs />
      <MenuBar>
        {menus.map((m) => <MenuItem key={m}>{m}</MenuItem>)}
      </MenuBar>
      <Body>
        <CommandArea>
          <CommandHistory />
          <CommandLine>
            Command:
            <CommandInput />
          </CommandLine>
        </CommandArea>
        <ToolTabs>
          {toolTabs.map((t, i) => <ToolTab key={t} $active={i === 0}>{t}</ToolTab>)}
        </ToolTabs>
        <Toolbar>
          {toolbar.map((t) => <ToolButton key={t} spec={t} />)}
        </Toolbar>
        <Work>
          <ToolColumn>
            <Grip />
            <ToolGrid>
              {sideTools.map((t) => <ToolButton key={t} spec={t} />)}
            </ToolGrid>
          </ToolColumn>
          <ViewColumn>
            <Viewport>
              <PerspectiveScene />
              <ViewTitle>Perspective<ViewArrow /></ViewTitle>
            </Viewport>
            <ViewTabs>
              <ViewTab $active>Perspective</ViewTab>
              <ViewTab>Top</ViewTab>
              <ViewTab>Front</ViewTab>
              <ViewTab>Right</ViewTab>
              <ViewTab $plain aria-label="New viewport">
                <svg width="11" height="11" viewBox="0 0 11 11"><path d="M4 1H7V4H10V7H7V10H4V7H1V4H4Z" fill="#fff" stroke="#555" /></svg>
              </ViewTab>
            </ViewTabs>
          </ViewColumn>
          <Panel>
            <PanelTabs>
              {tabIcons.map(([label, art], i) => (
                <PanelTab key={label} $active={i === 0}>
                  <svg width="15" height="15" viewBox="2 1 26 26" fill="none">{art}</svg>
                  {label}
                </PanelTab>
              ))}
            </PanelTabs>
            <PropTable>
              <colgroup><GutterCol /><NameCol /><col /></colgroup>
              {groups.map(([title, rows]) => (
                <tbody key={title}>
                  <tr><GroupHead colSpan={3}>{title}</GroupHead></tr>
                  {rows.map(([name, value, kind]) => {
                    const id = `${title}-${name}`.replace(/ /g, "-").toLowerCase();
                    return (
                      <tr key={name}>
                        <Gutter />
                        <NameCell $off={kind === "off"}><label htmlFor={id}>{name}</label></NameCell>
                        <ValueCell $off={kind === "off"}><PropValue id={id} kind={kind} value={value} /></ValueCell>
                      </tr>
                    );
                  })}
                </tbody>
              ))}
            </PropTable>
          </Panel>
        </Work>
        <SnapBar>
          {snaps.map(([name, on, raised]) => (
            <SnapItem key={name}>
              <Tick type="checkbox" defaultChecked={!!on} $raised={raised} />
              {name}
            </SnapItem>
          ))}
        </SnapBar>
        <StatusBar>
          <StatusCell $w={55}>CPlane</StatusCell>
          <StatusCell $w={88}>x 6.688</StatusCell>
          <StatusCell $w={88}>y 10.616</StatusCell>
          <StatusCell $w={88}>z 0.000</StatusCell>
          <StatusCell $w={88}>Inches</StatusCell>
          <LayerCell><Swatch />Default</LayerCell>
          {toggles.map(([name, w, on]) => <StatusToggle key={name} $w={w} $on={on}>{name}</StatusToggle>)}
          <CpuCell>CPU use: 2.1 %</CpuCell>
          <StatusEnd />
        </StatusBar>
      </Body>
    </Page>
  );
}
